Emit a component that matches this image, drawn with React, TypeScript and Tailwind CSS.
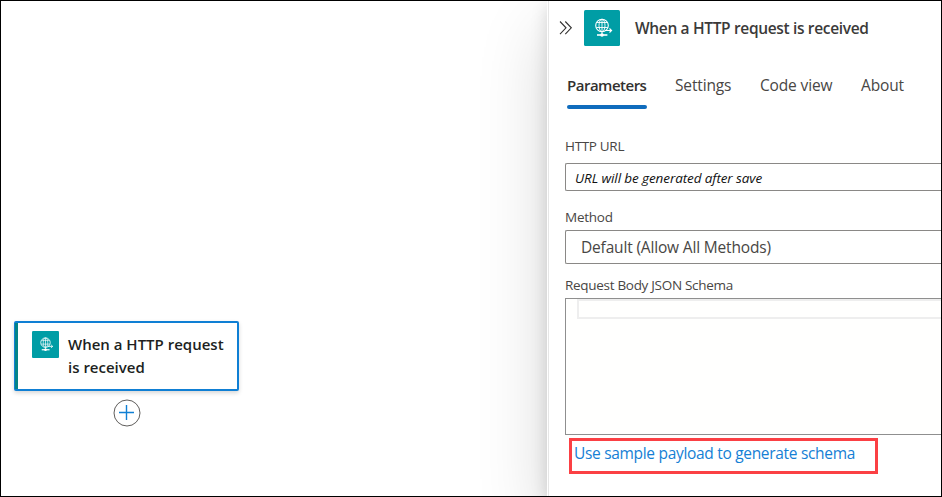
import React from 'react';

function GlobeIcon({ className }: { className: string }) {
  return (
    <svg viewBox="0 0 36 36" className={className} fill="none" stroke="#fff" strokeWidth="1.1">
      <rect width="36" height="36" rx="1.5" fill="#009da5" stroke="none" />
      <circle cx="18" cy="15.5" r="6.3" />
      <ellipse cx="18" cy="15.5" rx="3" ry="6.3" strokeWidth="0.9" />
      <path d="M18 9.2V25M12.8 12.5h10.6M12.3 17.5h11.6" strokeWidth="0.9" />
      <path d="M13 25h10.4" strokeWidth="1.6" />
      <circle cx="18" cy="25" r="1.8" fill="#fff" stroke="none" />
      <path d="M21 20.5h6.5M25.5 18.5l2.1 2-2.1 2" strokeWidth="1.1" />
    </svg>
  );
}

function TriggerCard() {
  return (
    <div className="flex h-[70px] w-[225px] shrink-0 rounded-[2px] border-2 border-l border-[#0f7fd4] bg-white shadow-[0_2px_4px_rgba(0,0,0,0.16)]">
      <div className="w-[3px] shrink-0 bg-[#038387]" />
      <GlobeIcon className="mt-2 ml-3.5 h-[27px] w-[27px] shrink-0" />
      <div className="ml-[9px] mt-[10px] text-[15px] leading-[23px] font-semibold whitespace-nowrap text-[#201f1e]">
        <div>When a HTTP request</div>
        <div>is received</div>
      </div>
    </div>
  );
}

function Canvas() {
  return (
    <div className="flex w-[546px] shrink-0 flex-col items-start bg-white pt-[320px] pl-[13px]">
      <TriggerCard />
      <svg viewBox="0 0 28 28" className="mt-2 ml-[99px] h-7 w-7 shrink-0" fill="none">
        <circle cx="14" cy="14" r="13" stroke="#605e5c" strokeWidth="1" />
        <path d="M13.5 6v15M6 13.5h15" stroke="#0f7fd4" strokeWidth="1.4" />
      </svg>
    </div>
  );
}

function Panel() {
  return (
    <div className="relative flex w-[395px] shrink-0 flex-col border-l border-white bg-white shadow-[0_29px_66px_rgba(0,0,0,0.16),0_5px_16px_rgba(0,0,0,0.14)]">
      <div className="flex flex-1 flex-col border-l border-[#e6e6e6] pl-4">
        <div className="flex h-[54px] items-center">
          <svg viewBox="0 0 14 16" className="-ml-[6px] h-4 w-3.5 shrink-0" fill="none" stroke="#323130" strokeWidth="1.1">
            <path d="M1 1.5l6 6.3-6 6.3M6.3 1.5l6 6.3-6 6.3" />
          </svg>
          <GlobeIcon className="ml-[11px] h-9 w-9 shrink-0" />
          <div className="mt-px ml-[15px] text-[15.5px] font-semibold whitespace-nowrap text-[#3b3a39] tracking-[-0.34px]">When a HTTP request is received</div>
        </div>
        <div className="ml-[2px] flex h-[54px] pt-[19px] text-[15.5px] leading-[22px] whitespace-nowrap text-[#484644]">
          <div className="w-20 shrink-0 font-semibold text-[#323130]">
            <div className="h-[31px] text-[15px] tracking-[-0.5px]">Parameters</div>
            <div className="h-1 w-20 rounded-full bg-[#0f6cbd]" />
          </div>
          <div className="ml-7 w-[57px] shrink-0 tracking-[-0.15px]">Settings</div>
          <div className="ml-7 w-[73px] shrink-0 tracking-[-0.15px]">Code view</div>
          <div className="ml-7 tracking-[-0.15px]">About</div>
        </div>
        <div className="mt-[27px] h-[27px] text-[13.5px] leading-[20px] text-[#484644] tracking-[-0.32px]">HTTP URL</div>
        <div className="h-7 shrink-0 rounded-l-[2px] border border-r-0 border-[#8a8886] pl-[9px] text-[13.5px] leading-[29px] text-[#111111] italic tracking-[-0.1px]">URL will be generated after save</div>
        <div className="mt-4 h-[23px] text-[13.5px] leading-[20px] text-[#484644] tracking-[-0.25px]">Method</div>
        <div className="h-[34px] shrink-0 rounded-l-[2px] border border-r-0 border-[#8a8886] pl-[15px] text-[15.5px] leading-[33px] text-[#484644] tracking-[-0.17px]">Default (Allow All Methods)</div>
        <div className="mt-[11px] h-[23px] text-[13.5px] leading-[20px] text-[#484644] tracking-[-0.3px]">Request Body JSON Schema</div>
        <div className="h-[137px] shrink-0 border border-r-0 border-[#8f8f8f] bg-[#fffffe] pl-[11px]">
          <div className="h-5 border-2 border-r-0 border-[#eeeeee]" />
        </div>
        <div className="mt-[3px] ml-1 h-9 w-[309px] shrink-0 border-3 border-[#fb4044] pl-[2px] text-[15.5px] leading-[25px] whitespace-nowrap text-[#1580d5] tracking-[-0.31px]">Use sample payload to generate schema</div>
      </div>
    </div>
  );
}

export default function App() {
  return (
    <div className="flex h-[497px] w-[942px] overflow-hidden border border-black bg-white font-['Open_Sans','Noto_Sans',sans-serif]">
      <Canvas />
      <Panel />
    </div>
  );
}
